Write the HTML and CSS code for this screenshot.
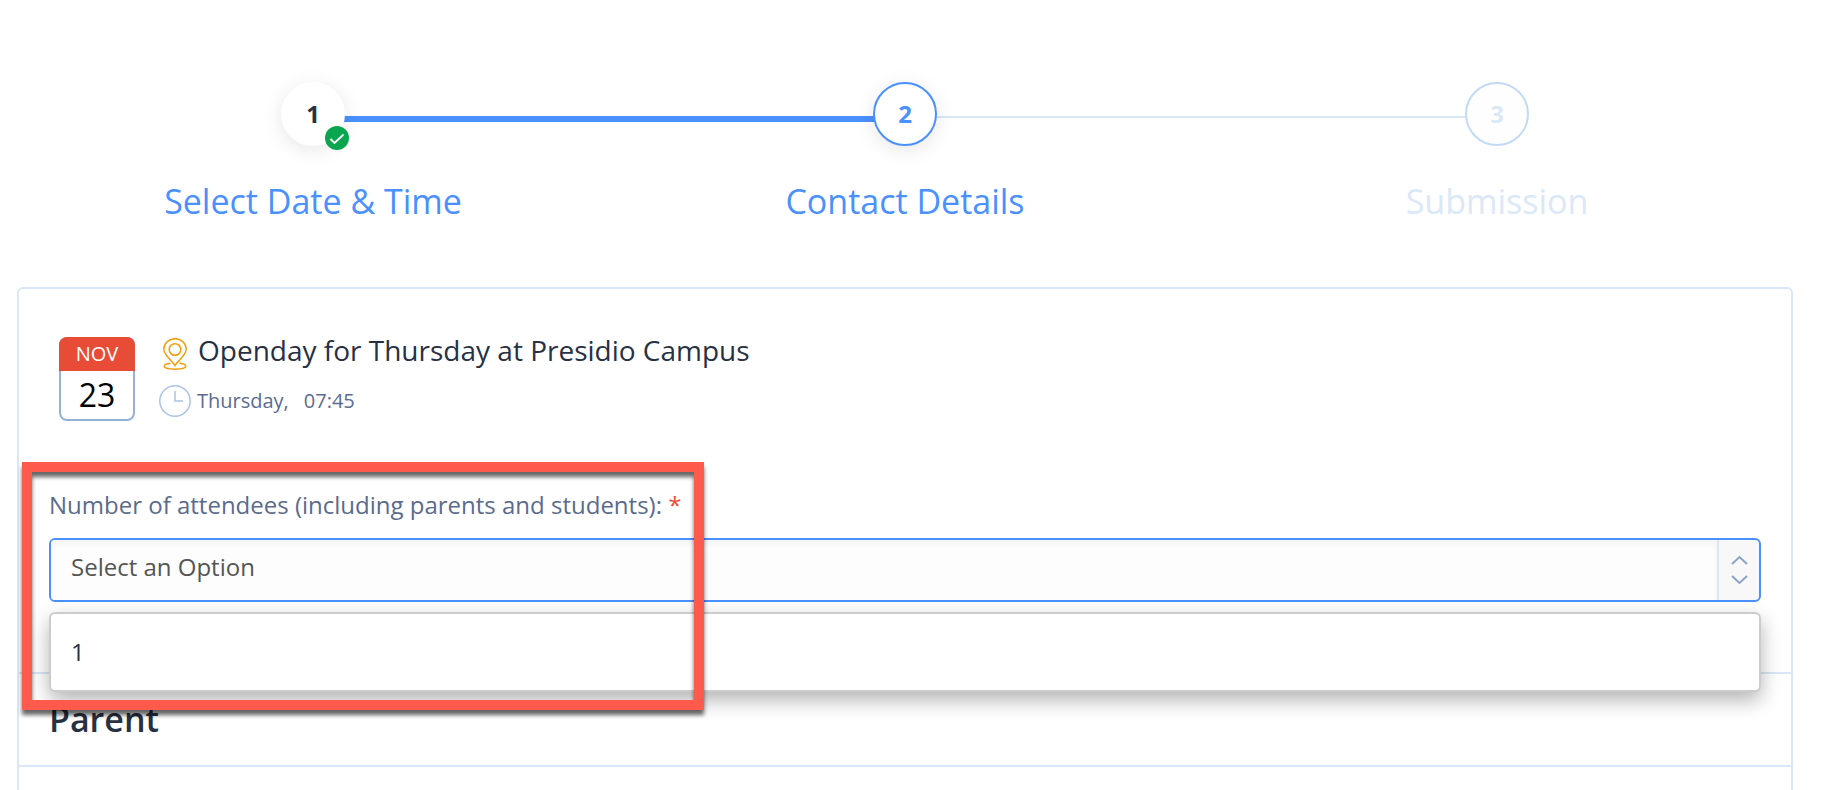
FILE: index.html
```html
<!DOCTYPE html>
<html lang="en">
<head>
    <meta charset="UTF-8">
    <meta name="viewport" content="width=device-width, initial-scale=1.0">
    <title>Contact Details</title>
    <link rel="stylesheet" href="styles.css">
</head>
<body>
    <ol class="steps">
        <li class="step done">
            <div class="step-circle">1
                <svg class="step-check" viewBox="0 0 24 24">
                    <circle cx="12" cy="12" r="12" fill="#0aa64f"/>
                    <path d="M5.500 13l4 4 9-8.500" fill="none" stroke="#fff" stroke-width="1.800"/>
                </svg>
            </div>
            <div class="step-label">Select Date &amp; Time</div>
        </li>
        <li class="step current">
            <div class="step-circle">2</div>
            <div class="step-label">Contact Details</div>
        </li>
        <li class="step">
            <div class="step-circle">3</div>
            <div class="step-label">Submission</div>
        </li>
    </ol>

    <form class="card">
        <div class="event">
            <div class="calendar">
                <div class="calendar-month">NOV</div>
                <div class="calendar-day">23</div>
            </div>
            <div class="event-info">
                <div class="event-title">
                    <svg class="icon" viewBox="0 0 32 32" fill="none" stroke="#f59c0b" stroke-width="1.500">
                        <path d="M16 27.500C12.500 22 4.800 17 4.800 11.300a11.200 10.600 0 0 1 22.400 0C27.200 17 19.500 22 16 27.500z"/>
                        <circle cx="16" cy="11.500" r="5.800"/>
                        <path d="M11.500 25.200c-3.500.4-6.300 1.300-6.300 2.900 0 2 4.500 3.100 10.800 3.100s10.800-1.100 10.800-3.100c0-1.600-2.800-2.500-6.300-2.900"/>
                    </svg>
                    <span>Openday for Thursday at Presidio Campus</span>
                </div>
                <div class="event-time">
                    <svg class="icon" viewBox="0 0 32 32" fill="none" stroke="#a9c3e4" stroke-width="1.500">
                        <circle cx="16" cy="16" r="15.200"/>
                        <path d="M16 6v10h8"/>
                    </svg>
                    <span>Thursday,</span>
                    <span class="hour">07:45</span>
                </div>
            </div>
        </div>

        <div class="field">
            <label for="attendees">Number of attendees (including parents and students): <span class="required">*</span></label>
            <div class="select-box">
                <select id="attendees">
                    <option value="">Select an Option</option>
                    <option>1</option>
                </select>
                <svg class="select-arrows" viewBox="0 0 40 60" fill="none" stroke="#8ba3c7" stroke-width="2">
                    <path d="M13 24l7.500-7 7.500 7M13 36l7.500 7 7.500-7"/>
                </svg>
            </div>
            <ul class="options" role="listbox" aria-label="Number of attendees">
                <li role="option">1</li>
            </ul>
            <div class="highlight"></div>
        </div>

        <h2 class="section-title">Parent</h2>
    </form>
</body>
</html>
```

FILE: styles.css
```css
* {
    box-sizing: border-box;
}
body {
    display: flex;
    flex-direction: column;
    min-height: 100vh;
    margin: 0;
    padding: 82px 29px 0 17px;
    background: #fff;
    color: #283144;
    font-family: 'Open Sans', 'Noto Sans', sans-serif;
    font-size: 24px;
}

/* Steps */
.steps {
    display: flex;
    margin: 0 0 64px;
    padding: 0;
    list-style: none;
}
.step {
    position: relative;
    flex: 1;
    display: flex;
    flex-direction: column;
    align-items: center;
    gap: 33px;
    color: #dbe8f8;
}
/* line to the next step */
.step:not(:last-child)::after {
    content: "";
    position: absolute;
    top: 34px;
    left: 50%;
    width: 100%;
    height: 2px;
    background: #d9e7f6;
}
.step.done::after {
    height: 6px;
    background: #4a90ff;
}
.step-circle {
    position: relative;
    z-index: 1;
    width: 64px;
    height: 64px;
    border: 2px solid #c3daf4;
    border-radius: 50%;
    background: #fefefe;
    font-weight: bold;
    line-height: 60px;
    text-align: center;
}
.step-label {
    font-size: 34px;
    line-height: 44px;
}
.done,
.current {
    color: #4a90ff;
}
.done .step-circle,
.current .step-circle {
    background: #fff;
    box-shadow: 0 4px 20px rgba(0, 0, 0, 0.1);
}
.done .step-circle {
    border-color: #fff;
    color: #283144;
}
.current .step-circle {
    border-color: #4a90ff;
}
.step-check {
    position: absolute;
    right: -6px;
    bottom: -6px;
    width: 24px;
    height: 24px;
}

/* Card */
.card {
    flex: 1;
    border: 2px solid #d9e7f8;
    border-bottom: 0;
    border-radius: 6px 6px 0 0;
}
.event {
    display: flex;
    gap: 24px;
    padding: 48px 40px 0;
}
.calendar {
    width: 76px;
    height: 84px;
    border: 2px solid #94b1d9;
    border-radius: 8px;
    color: #000;
    text-align: center;
}
.calendar-month {
    margin: -2px -2px 0;
    border-radius: 8px 8px 0 0;
    background: #e84c36;
    color: #fff;
    font-size: 20px;
    line-height: 34px;
}
.calendar-day {
    font-size: 32px;
    line-height: 48px;
}
.event-info {
    display: flex;
    flex-direction: column;
    gap: 15px;
    padding-top: 1px;
}
.event-title,
.event-time {
    display: flex;
    gap: 6px;
}
.event-title {
    gap: 7px;
    font-size: 28px;
    line-height: 24px;
}
.event-time {
    color: #5b6b91;
    font-size: 20px;
    line-height: 32px;
}
.hour {
    margin-left: 9px;
}
.icon {
    width: 32px;
    height: 32px;
}

/* Attendees */
.field {
    position: relative;
    padding: 68px 30px 70px;
    border-bottom: 2px solid #d9e7f8;
}
.field label {
    display: block;
    margin-bottom: 17px;
    color: #5b6b8c;
    line-height: 32px;
}
.required {
    color: #e84c36;
}
.select-box {
    display: flex;
    height: 64px;
    border: 2px solid #4a90ff;
    border-radius: 6px;
    background: #f8f8f8;
    overflow: hidden;
}
.select-box select {
    flex: 1;
    padding: 0 20px 8px;
    border: 0;
    border-right: 2px solid #d9e7f8;
    outline: 0;
    appearance: none;
    background: #fdfdfd;
    box-shadow: inset 0 4px 6px rgba(0, 0, 0, 0.04);
    color: #555;
    font: inherit;
}
.select-arrows {
    width: 40px;
    height: 60px;
}
.options {
    position: absolute;
    z-index: 1;
    top: calc(100% - 60px);
    left: 30px;
    right: 30px;
    margin: 0;
    padding: 22px 20px;
    border: 2px solid #ccc;
    border-radius: 6px;
    background: #fff;
    box-shadow: 0 8px 20px rgba(0, 0, 0, 0.3);
    line-height: 32px;
    list-style: none;
}
.highlight {
    position: absolute;
    z-index: 2;
    top: 41px;
    left: 3px;
    width: 682px;
    height: 248px;
    border: 10px solid #ff5a4c;
    filter: drop-shadow(0 5px 2px rgba(0, 0, 0, 0.6));
    pointer-events: none;
}
.section-title {
    margin: 0;
    padding: 23px 30px 24px;
    border-bottom: 2px solid #d9e7f8;
    font-size: 34px;
    font-weight: 600;
    line-height: 44px;
}
```
